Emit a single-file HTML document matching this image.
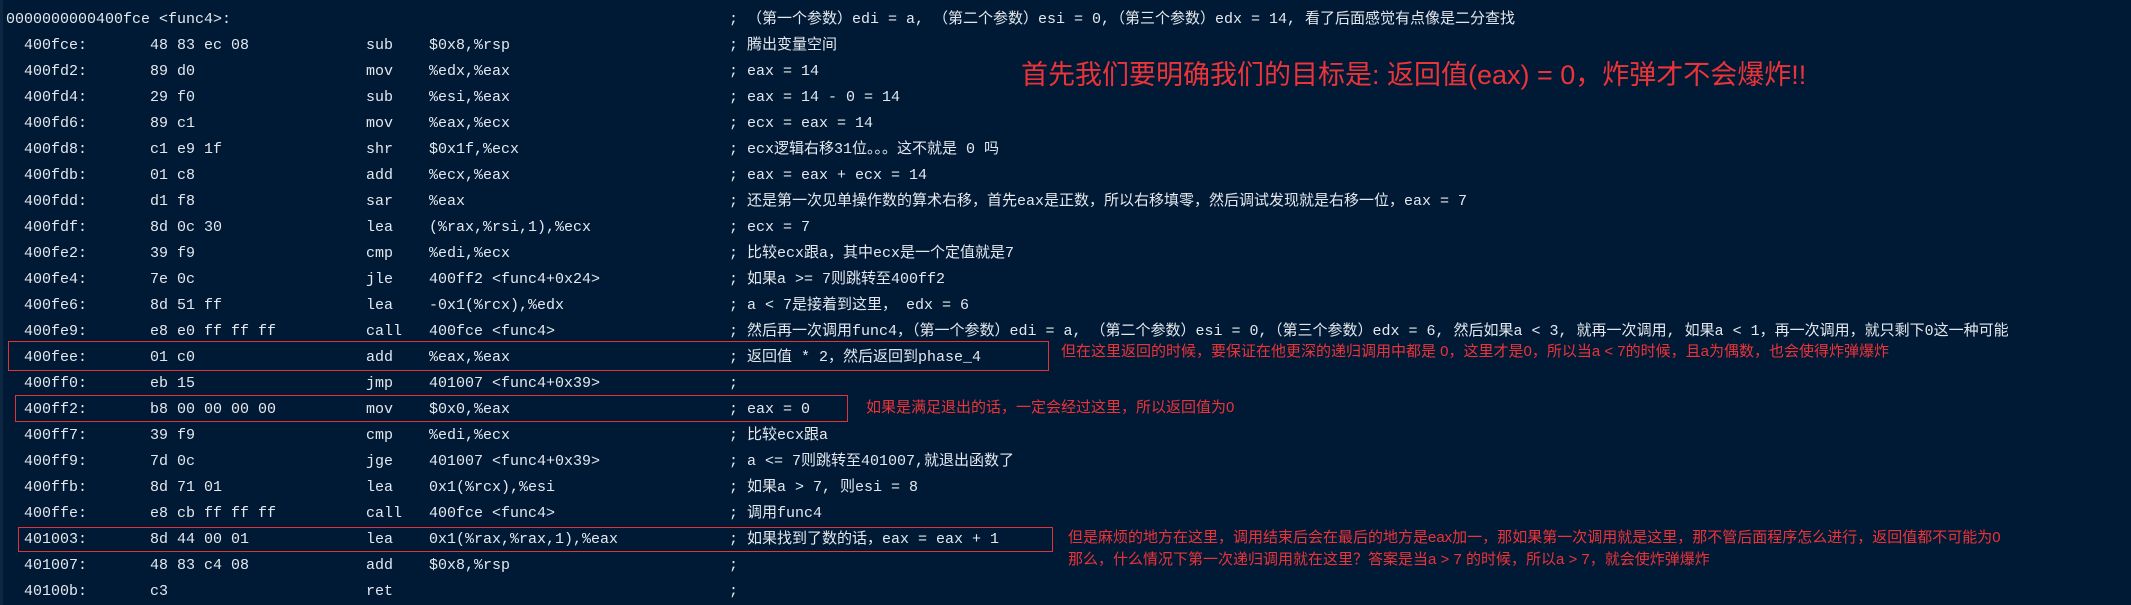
<!DOCTYPE html>
<html><head><meta charset="utf-8">
<style>
html,body{margin:0;padding:0}
body{width:2131px;height:605px;background:#001a35;position:relative;overflow:hidden;
font-family:"Liberation Mono","Noto Sans CJK SC",monospace;font-size:15px;color:#e4e8ee}
.r{position:absolute;left:0;height:20px;line-height:20px;white-space:nowrap;width:2131px}
.r span{position:absolute;top:0}
.a{left:24px}.b{left:150px}.m{left:366px}.o{left:429px}.c{left:729px}
.box{position:absolute;border:1.5px solid #e0343a;box-sizing:border-box}
.red{position:absolute;color:#ec3338;font-family:"Liberation Sans","Noto Sans CJK SC",sans-serif;white-space:nowrap}
.edge{position:absolute;left:0;top:0;width:3px;height:605px;background:#0d2642}
</style></head><body>
<div class="edge"></div>
<div class="r" style="top:10px"><span style="left:6px">0000000000400fce &lt;func4&gt;:</span><span class="c">; （第一个参数）edi = a, （第二个参数）esi = 0,（第三个参数）edx = 14, 看了后面感觉有点像是二分查找</span></div>
<div class="r" style="top:36px"><span class="a">400fce:</span><span class="b">48 83 ec 08</span><span class="m">sub</span><span class="o">$0x8,%rsp</span><span class="c">; 腾出变量空间</span></div>
<div class="r" style="top:62px"><span class="a">400fd2:</span><span class="b">89 d0</span><span class="m">mov</span><span class="o">%edx,%eax</span><span class="c">; eax = 14</span></div>
<div class="r" style="top:88px"><span class="a">400fd4:</span><span class="b">29 f0</span><span class="m">sub</span><span class="o">%esi,%eax</span><span class="c">; eax = 14 - 0 = 14</span></div>
<div class="r" style="top:114px"><span class="a">400fd6:</span><span class="b">89 c1</span><span class="m">mov</span><span class="o">%eax,%ecx</span><span class="c">; ecx = eax = 14</span></div>
<div class="r" style="top:140px"><span class="a">400fd8:</span><span class="b">c1 e9 1f</span><span class="m">shr</span><span class="o">$0x1f,%ecx</span><span class="c">; ecx逻辑右移31位。。。这不就是 0 吗</span></div>
<div class="r" style="top:166px"><span class="a">400fdb:</span><span class="b">01 c8</span><span class="m">add</span><span class="o">%ecx,%eax</span><span class="c">; eax = eax + ecx = 14</span></div>
<div class="r" style="top:192px"><span class="a">400fdd:</span><span class="b">d1 f8</span><span class="m">sar</span><span class="o">%eax</span><span class="c">; 还是第一次见单操作数的算术右移，首先eax是正数，所以右移填零，然后调试发现就是右移一位，eax = 7</span></div>
<div class="r" style="top:218px"><span class="a">400fdf:</span><span class="b">8d 0c 30</span><span class="m">lea</span><span class="o">(%rax,%rsi,1),%ecx</span><span class="c">; ecx = 7</span></div>
<div class="r" style="top:244px"><span class="a">400fe2:</span><span class="b">39 f9</span><span class="m">cmp</span><span class="o">%edi,%ecx</span><span class="c">; 比较ecx跟a，其中ecx是一个定值就是7</span></div>
<div class="r" style="top:270px"><span class="a">400fe4:</span><span class="b">7e 0c</span><span class="m">jle</span><span class="o">400ff2 &lt;func4+0x24&gt;</span><span class="c">; 如果a &gt;= 7则跳转至400ff2</span></div>
<div class="r" style="top:296px"><span class="a">400fe6:</span><span class="b">8d 51 ff</span><span class="m">lea</span><span class="o">-0x1(%rcx),%edx</span><span class="c">; a &lt; 7是接着到这里， edx = 6</span></div>
<div class="r" style="top:322px"><span class="a">400fe9:</span><span class="b">e8 e0 ff ff ff</span><span class="m">call</span><span class="o">400fce &lt;func4&gt;</span><span class="c">; 然后再一次调用func4，（第一个参数）edi = a, （第二个参数）esi = 0,（第三个参数）edx = 6,   然后如果a &lt; 3,  就再一次调用,  如果a &lt; 1，再一次调用，就只剩下0这一种可能</span></div>
<div class="r" style="top:348px"><span class="a">400fee:</span><span class="b">01 c0</span><span class="m">add</span><span class="o">%eax,%eax</span><span class="c">; 返回值 * 2，然后返回到phase_4</span></div>
<div class="r" style="top:374px"><span class="a">400ff0:</span><span class="b">eb 15</span><span class="m">jmp</span><span class="o">401007 &lt;func4+0x39&gt;</span><span class="c">;</span></div>
<div class="r" style="top:400px"><span class="a">400ff2:</span><span class="b">b8 00 00 00 00</span><span class="m">mov</span><span class="o">$0x0,%eax</span><span class="c">; eax = 0</span></div>
<div class="r" style="top:426px"><span class="a">400ff7:</span><span class="b">39 f9</span><span class="m">cmp</span><span class="o">%edi,%ecx</span><span class="c">; 比较ecx跟a</span></div>
<div class="r" style="top:452px"><span class="a">400ff9:</span><span class="b">7d 0c</span><span class="m">jge</span><span class="o">401007 &lt;func4+0x39&gt;</span><span class="c">; a &lt;= 7则跳转至401007,就退出函数了</span></div>
<div class="r" style="top:478px"><span class="a">400ffb:</span><span class="b">8d 71 01</span><span class="m">lea</span><span class="o">0x1(%rcx),%esi</span><span class="c">; 如果a &gt; 7,  则esi = 8</span></div>
<div class="r" style="top:504px"><span class="a">400ffe:</span><span class="b">e8 cb ff ff ff</span><span class="m">call</span><span class="o">400fce &lt;func4&gt;</span><span class="c">; 调用func4</span></div>
<div class="r" style="top:530px"><span class="a">401003:</span><span class="b">8d 44 00 01</span><span class="m">lea</span><span class="o">0x1(%rax,%rax,1),%eax</span><span class="c">; 如果找到了数的话，eax = eax + 1</span></div>
<div class="r" style="top:556px"><span class="a">401007:</span><span class="b">48 83 c4 08</span><span class="m">add</span><span class="o">$0x8,%rsp</span><span class="c">;</span></div>
<div class="r" style="top:582px"><span class="a">40100b:</span><span class="b">c3</span><span class="m">ret</span><span class="c">;</span></div>

<div class="box" style="left:8px;top:341px;width:1041px;height:30px"></div>
<div class="box" style="left:15px;top:395px;width:833px;height:27px"></div>
<div class="box" style="left:18px;top:527px;width:1035px;height:25px"></div>

<div class="red" style="left:1021px;top:58px;font-size:27px;line-height:34px">首先我们要明确我们的目标是:  返回值(eax) = 0，炸弹才不会爆炸!!</div>
<div class="red" style="left:1061px;top:342px;font-size:15px;line-height:20px">但在这里返回的时候，要保证在他更深的递归调用中都是 0，这里才是0，所以当a &lt; 7的时候，且a为偶数，也会使得炸弹爆炸</div>
<div class="red" style="left:866px;top:398px;font-size:15px;line-height:20px">如果是满足退出的话，一定会经过这里，所以返回值为0</div>
<div class="red" style="left:1068px;top:528px;font-size:15px;line-height:20px">但是麻烦的地方在这里，调用结束后会在最后的地方是eax加一，那如果第一次调用就是这里，那不管后面程序怎么进行，返回值都不可能为0</div>
<div class="red" style="left:1068px;top:550px;font-size:15px;line-height:20px">那么，什么情况下第一次递归调用就在这里？答案是当a &gt; 7 的时候，所以a &gt; 7，就会使炸弹爆炸</div>
</body></html>
